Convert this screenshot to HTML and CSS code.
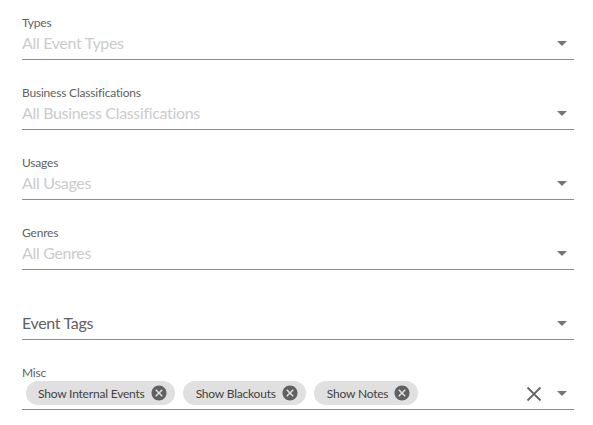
FILE: index.html
```html
<!DOCTYPE html>
<html lang="en">
<head>
  <meta charset="UTF-8" />
  <title>Event Filters</title>
  <link rel="stylesheet" href="styles.css">
</head>
<body>
  <svg class="defs" width="0" height="0">
    <symbol id="chip-close" viewBox="0 0 24 24">
      <path d="M12 2C6.47 2 2 6.47 2 12s4.47 10 10 10 10-4.47 10-10S17.53 2 12 2zm5 13.59L15.59 17 12 13.41 8.41 17 7 15.59 10.59 12 7 8.41 8.41 7 12 10.59 15.59 7 17 8.41 13.41 12 17 15.59z"/>
    </symbol>
  </svg>

  <div class="filters">
    <div class="field">
      <div class="label">Types</div>
      <div class="control">
        <div class="value placeholder">All Event Types</div>
        <span class="arrow"></span>
      </div>
    </div>

    <div class="field">
      <div class="label">Business Classifications</div>
      <div class="control">
        <div class="value placeholder">All Business Classifications</div>
        <span class="arrow"></span>
      </div>
    </div>

    <div class="field">
      <div class="label">Usages</div>
      <div class="control">
        <div class="value placeholder">All Usages</div>
        <span class="arrow"></span>
      </div>
    </div>

    <div class="field">
      <div class="label">Genres</div>
      <div class="control">
        <div class="value placeholder">All Genres</div>
        <span class="arrow"></span>
      </div>
    </div>

    <div class="field">
      <div class="label"></div>
      <div class="control">
        <div class="value">Event Tags</div>
        <span class="arrow"></span>
      </div>
    </div>

    <div class="field">
      <div class="label">Misc</div>
      <div class="control chips-control">
        <div class="chips">
          <span class="chip"><span class="chip-text">Show Internal Events</span><svg class="chip-icon"><use href="#chip-close"/></svg></span>
          <span class="chip"><span class="chip-text">Show Blackouts</span><svg class="chip-icon"><use href="#chip-close"/></svg></span>
          <span class="chip"><span class="chip-text">Show Notes</span><svg class="chip-icon"><use href="#chip-close"/></svg></span>
        </div>
        <svg class="clear" viewBox="0 0 16 16"><path d="M1.5 1.5l13 13M14.5 1.5l-13 13"/></svg>
        <span class="arrow"></span>
      </div>
    </div>
  </div>
</body>
</html>
```

FILE: styles.css
```css
body {
  margin: 0;
  background: #fff;
  font-family: Lato, "Noto Sans", sans-serif;
  color: #616161;
}

.defs {
  display: block;
}

.filters {
  padding: 0 19px 0 22px;
}

.field {
  height: 70px;
  box-sizing: border-box;
  padding-top: 16px;
}

.label {
  height: 14px;
  font-size: 12px;
  line-height: 14px;
  letter-spacing: -0.2px;
  color: #616161;
}

.control {
  display: flex;
  align-items: center;
  height: 29px;
  border-bottom: 1px solid #8c8c8c;
}

.value {
  flex: 1;
  margin-bottom: 3px;
  font-size: 16px;
  line-height: 20px;
  letter-spacing: -0.33px;
  color: #616161;
}

.placeholder {
  color: #cbcbcb;
}

.arrow {
  width: 0;
  height: 0;
  margin: 0 7px 2px 0;
  border-left: 5px solid transparent;
  border-right: 5px solid transparent;
  border-top: 5px solid #757575;
}

.chips {
  flex: 1;
  display: flex;
  gap: 8px;
  padding: 0 0 4px 4px;
}

.chip {
  display: flex;
  align-items: center;
  gap: 5px;
  height: 24px;
  padding: 0 7px 0 12px;
  border-radius: 12px;
  background: #e0e0e0;
  font-size: 12px;
  letter-spacing: -0.2px;
  color: #424242;
  white-space: nowrap;
}

.chip + .chip {
  padding-left: 13px;
}

.chip-text {
  margin-top: 2px;
}

.chip-icon {
  width: 18px;
  height: 18px;
  fill: #616161;
}

.clear {
  width: 16px;
  height: 16px;
  margin: 0 15px 2px 0;
  fill: none;
  stroke: #666;
  stroke-width: 1.8;
}
```
